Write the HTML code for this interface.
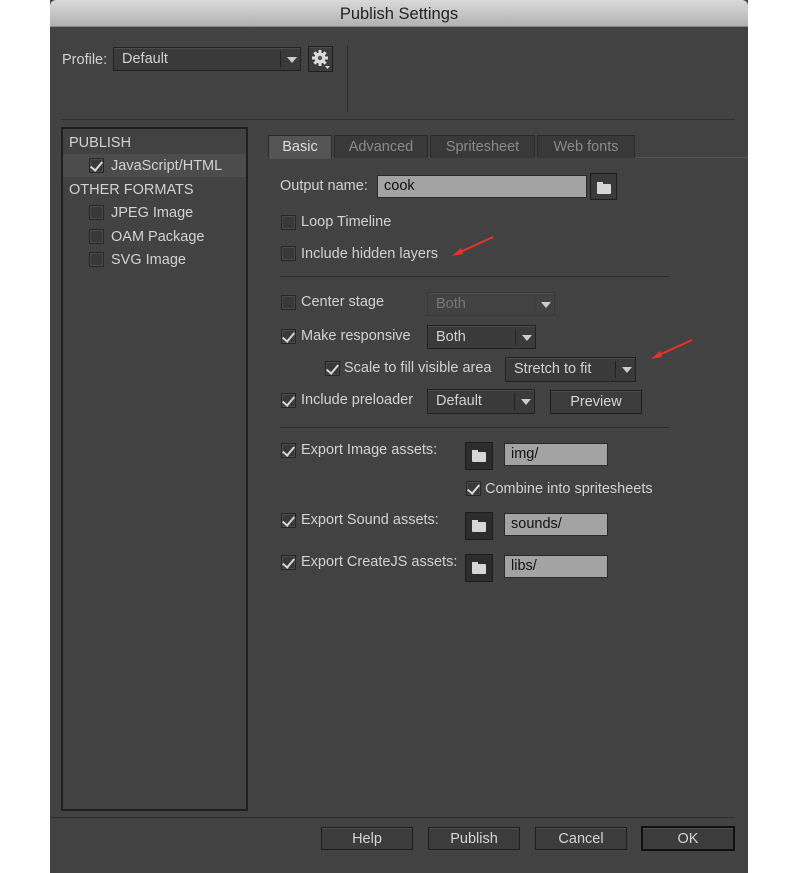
<!DOCTYPE html>
<html><head><meta charset="utf-8"><style>
*{margin:0;padding:0;box-sizing:border-box}
body{width:800px;height:873px;background:#fff;position:relative;overflow:hidden;font-family:"Liberation Sans",sans-serif;font-size:14.5px;color:#d2d2d2}
.dlg{position:absolute;left:50px;top:0;width:698px;height:873px;background:#424242}
.title{position:absolute;left:50px;top:0;width:698px;height:27px;background:linear-gradient(#dadada,#b2b2b2);border-radius:6px 6px 0 0;border-bottom:1px solid #8a8a8a;color:#222;font-size:16.5px;text-align:center;line-height:28px}
.a{position:absolute}
.t{position:absolute;white-space:nowrap;line-height:18px}
.cb{position:absolute;width:15px;height:15px;background:#383838;border:1px solid #262626;box-shadow:inset 0 0 0 1px #4a4a4a}
.cb.on::after{content:"";position:absolute;left:3px;top:0px;width:5px;height:10px;border-right:2px solid #d8d8d8;border-bottom:2px solid #d8d8d8;transform:rotate(40deg)}
.dd{position:absolute;background:#3a3a3a;border:1px solid #222;box-shadow:inset 0 1px 0 #4c4c4c;color:#d2d2d2;padding-left:8px;line-height:22px}
.dd .ar{position:absolute;right:0;top:3px;bottom:3px;width:20px;border-left:1px solid #222}
.dd .ar::after{content:"";position:absolute;left:6px;top:6px;border-left:5px solid transparent;border-right:5px solid transparent;border-top:6px solid #ccc}
.inp{position:absolute;background:#a3a3a3;border:1px solid #2a2a2a;color:#111;padding-left:6px;line-height:21px}
.btn{position:absolute;background:#3c3c3c;border:1px solid #1e1e1e;box-shadow:inset 0 1px 0 #4e4e4e;text-align:center;line-height:22px;color:#d5d5d5}
.fb{position:absolute;background:#2c2c2c;border:1px solid #1c1c1c}
.fb i{position:absolute;left:6px;top:9px;width:14px;height:10px;background:#d6d6d6;border-radius:1px}
.fb i::before{content:"";position:absolute;left:0;top:-2px;width:6px;height:3px;background:#d6d6d6}
.tab{position:absolute;top:135px;height:23px;background:#393939;border:1px solid #2a2a2a;border-bottom:none;color:#8a8a8a;text-align:center;line-height:23px;font-size:14.5px}
.hl{position:absolute;height:1px;background:#5a5a5a;border-bottom:1px solid #2e2e2e}
</style></head><body>
<div class="dlg"></div>
<div class="title">Publish Settings</div>

<div class="t" style="left:62px;top:51px">Profile:</div>
<div class="dd" style="left:113px;top:47px;width:188px;height:24px">Default<span class="ar"></span></div>
<div class="btn" style="left:308px;top:46px;width:25px;height:26px;padding:0"><svg width="23" height="24" viewBox="0 0 23 24"><g fill="#ddd" transform="translate(11,11)"><circle r="5.5"/><g id="tt"><rect x="-1.5" y="-8" width="3" height="16"/><rect x="-8" y="-1.5" width="16" height="3"/></g><use href="#tt" transform="rotate(45)"/></g><circle cx="11" cy="11" r="2.2" fill="#555"/><path d="M16 19h5l-2.5 3z" fill="#ddd"/></svg></div>
<div class="a" style="left:347px;top:45px;width:1px;height:67px;background:#2c2c2c"></div>
<div class="hl" style="left:61px;top:119px;width:674px"></div>

<div class="a" style="left:61px;top:127px;width:187px;height:684px;border:2px solid #1f1f1f;background:#424242"></div>
<div class="t" style="left:69px;top:134px">PUBLISH</div>
<div class="a" style="left:63px;top:154px;width:183px;height:23px;background:#4c4c4c"></div>
<div class="cb on" style="left:89px;top:158px"></div>
<div class="t" style="left:111px;top:157px">JavaScript/HTML</div>
<div class="t" style="left:69px;top:181px">OTHER FORMATS</div>
<div class="cb" style="left:89px;top:205px"></div><div class="t" style="left:111px;top:204px">JPEG Image</div>
<div class="cb" style="left:89px;top:229px"></div><div class="t" style="left:111px;top:228px">OAM Package</div>
<div class="cb" style="left:89px;top:252px"></div><div class="t" style="left:111px;top:251px">SVG Image</div>

<div class="a" style="left:266px;top:157px;width:482px;height:1px;background:#555"></div>
<div class="tab" style="left:268px;width:64px;background:#545454;color:#ddd;height:24px">Basic</div>
<div class="tab" style="left:334px;width:94px">Advanced</div>
<div class="tab" style="left:430px;width:105px">Spritesheet</div>
<div class="tab" style="left:537px;width:98px">Web fonts</div>

<div class="t" style="left:280px;top:177px">Output name:</div>
<div class="inp" style="left:377px;top:175px;width:210px;height:23px">cook</div>
<div class="fb" style="left:590px;top:173px;width:27px;height:27px;background:#3a3a3a"><i style="top:10px"></i></div>

<div class="cb" style="left:281px;top:215px"></div><div class="t" style="left:301px;top:213px">Loop Timeline</div>
<div class="cb" style="left:281px;top:246px"></div><div class="t" style="left:301px;top:245px">Include hidden layers</div>
<div class="hl" style="left:280px;top:276px;width:389px"></div>

<div class="cb" style="left:281px;top:295px"></div><div class="t" style="left:301px;top:293px">Center stage</div>
<div class="dd" style="left:427px;top:292px;width:128px;height:24px;color:#777;border-color:#383838;background:#424242">Both<span class="ar" style="border-color:#383838"></span></div>
<div class="cb on" style="left:281px;top:329px"></div><div class="t" style="left:301px;top:327px">Make responsive</div>
<div class="dd" style="left:427px;top:325px;width:109px;height:24px">Both<span class="ar"></span></div>
<div class="cb on" style="left:325px;top:361px"></div><div class="t" style="left:344px;top:359px">Scale to fill visible area</div>
<div class="dd" style="left:505px;top:357px;width:131px;height:25px">Stretch to fit<span class="ar"></span></div>
<div class="cb on" style="left:281px;top:393px"></div><div class="t" style="left:301px;top:391px">Include preloader</div>
<div class="dd" style="left:427px;top:389px;width:108px;height:25px">Default<span class="ar"></span></div>
<div class="btn" style="left:550px;top:390px;width:92px;height:24px">Preview</div>
<div class="hl" style="left:280px;top:427px;width:389px"></div>

<div class="cb on" style="left:281px;top:443px"></div><div class="t" style="left:301px;top:441px">Export Image assets:</div>
<div class="fb" style="left:465px;top:442px;width:28px;height:28px"><i></i></div>
<div class="inp" style="left:504px;top:443px;width:104px;height:23px">img/</div>
<div class="cb on" style="left:466px;top:481px"></div><div class="t" style="left:485px;top:480px">Combine into spritesheets</div>
<div class="cb on" style="left:281px;top:513px"></div><div class="t" style="left:301px;top:511px">Export Sound assets:</div>
<div class="fb" style="left:465px;top:512px;width:28px;height:28px"><i></i></div>
<div class="inp" style="left:504px;top:513px;width:104px;height:23px">sounds/</div>
<div class="cb on" style="left:281px;top:555px"></div><div class="t" style="left:301px;top:553px">Export CreateJS assets:</div>
<div class="fb" style="left:465px;top:554px;width:28px;height:28px"><i></i></div>
<div class="inp" style="left:504px;top:555px;width:104px;height:23px">libs/</div>

<div class="hl" style="left:50px;top:817px;width:685px"></div>
<div class="btn" style="left:321px;top:827px;width:92px;height:23px">Help</div>
<div class="btn" style="left:428px;top:827px;width:92px;height:23px">Publish</div>
<div class="btn" style="left:535px;top:827px;width:92px;height:23px">Cancel</div>
<div class="btn" style="left:641px;top:826px;width:94px;height:25px;border:2px solid #111">OK</div>

<svg class="a" style="left:0;top:0" width="800" height="873">
<g stroke="#e8322a" stroke-width="2" fill="#e8322a">
<line x1="493" y1="237" x2="458" y2="253"/><path d="M452 256l9-8 2 6z" stroke="none"/>
<line x1="692" y1="340" x2="657" y2="356"/><path d="M651 359l9-8 2 6z" stroke="none"/>
</g></svg>
</body></html>
